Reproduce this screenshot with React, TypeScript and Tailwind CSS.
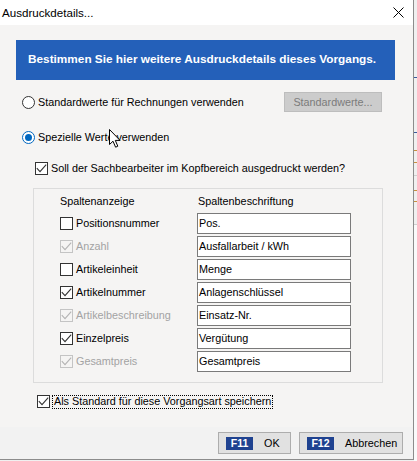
import React from "react";

function Check({ checked, disabled }: { checked: boolean; disabled?: boolean }) {
  return (
    <span
      className={`flex h-[13px] w-[13px] shrink-0 items-center justify-center border ${
        disabled ? "border-[#c4c4c4] bg-[#f5f4f3]" : "border-[#333333] bg-white"
      }`}
    >
      {checked && (
        <svg width="11" height="11" viewBox="0 0 11 11">
          <path
            d="M0.8 5.2 L4 8.6 L10.2 1.6"
            fill="none"
            stroke={disabled ? "#b3b3b3" : "#333333"}
            strokeWidth="1.1"
          />
        </svg>
      )}
    </span>
  );
}

function Radio({ on }: { on: boolean }) {
  return (
    <span
      className={`flex h-[13px] w-[13px] shrink-0 items-center justify-center rounded-full border bg-white ${
        on ? "border-[#0067c0]" : "border-[#333333]"
      }`}
    >
      {on && <span className="h-[7px] w-[7px] rounded-full bg-[#0067c0]" />}
    </span>
  );
}

type Row = { label: string; caption: string; checked: boolean; disabled?: boolean };

const rows: Row[] = [
  { label: "Positionsnummer", caption: "Pos.", checked: false },
  { label: "Anzahl", caption: "Ausfallarbeit / kWh", checked: true, disabled: true },
  { label: "Artikeleinheit", caption: "Menge", checked: false },
  { label: "Artikelnummer", caption: "Anlagenschlüssel", checked: true },
  { label: "Artikelbeschreibung", caption: "Einsatz-Nr.", checked: true, disabled: true },
  { label: "Einzelpreis", caption: "Vergütung", checked: true },
  { label: "Gesamtpreis", caption: "Gesamtpreis", checked: true, disabled: true },
];

function FKeyButton({ fkey, label, width }: { fkey: string; label: string; width: string }) {
  return (
    <div
      className={`flex h-[22px] ${width} items-center border border-[#adadad] bg-[#e1e1e1] pl-[7px]`}
    >
      <span className="flex h-[13px] w-[27px] items-center justify-center bg-[#1f4290] font-['Liberation_Sans',Arial,sans-serif] text-[10.5px] font-bold leading-none text-white">
        {fkey}
      </span>
      <span className="ml-[11px] text-[10.8px] text-black">{label}</span>
    </div>
  );
}

export default function App() {
  return (
    <div className="relative flex h-[461px] w-[417px] overflow-hidden bg-[#f0f0f0] font-['Liberation_Sans',Arial,sans-serif] text-[10.8px] text-black">
      {/* dialog window */}
      <div className="flex h-[460px] w-[414px] shrink-0 flex-col border-b border-r border-[#8c8c8c]">
        {/* title bar */}
        <div className="flex h-[25px] shrink-0 items-center justify-between bg-white pl-[2px] pr-[9px]">
          <span className="text-[11.6px]">Ausdruckdetails...</span>
          <svg width="11" height="11" viewBox="0 0 11 11" className="mb-[1px]">
            <path d="M0.5 0.5 L10.5 10.5 M10.5 0.5 L0.5 10.5" stroke="#000" strokeWidth="1" />
          </svg>
        </div>

        {/* body */}
        <div className="flex h-[402px] shrink-0 flex-col bg-[#f5f4f3] pt-[15px]">
          <div className="ml-[16px] flex h-[40px] w-[379px] items-center bg-[#2460b9] pl-[12px] text-[11.8px] font-bold text-white">
            Bestimmen Sie hier weitere Ausdruckdetails dieses Vorgangs.
          </div>

          <div className="mt-[12px] flex h-[20px] items-center pl-[22px] pr-[31px]">
            <Radio on={false} />
            <span className="ml-[3px]">Standardwerte für Rechnungen verwenden</span>
            <div className="ml-auto flex h-[20px] w-[98px] items-center justify-center border border-[#bdbdbd] bg-[#cccccc] text-[#7b7b7b]">
              Standardwerte...
            </div>
          </div>

          <div className="mt-[15px] flex h-[20px] items-center pl-[22px]">
            <Radio on={true} />
            <span className="ml-[3px]">Spezielle Werte verwenden</span>
          </div>

          <div className="mt-[11px] flex h-[20px] items-center pl-[35px]">
            <Check checked={true} />
            <span className="ml-[3px]">Soll der Sachbearbeiter im Kopfbereich ausgedruckt werden?</span>
          </div>

          {/* column settings group */}
          <div className="ml-[33px] mt-[10px] flex h-[195px] w-[350px] flex-col border border-[#dcdcdc] pl-[26px] pt-[4px]">
            <div className="flex h-[16px] items-center">
              <span className="w-[137px]">Spaltenanzeige</span>
              <span className="ml-[1px]">Spaltenbeschriftung</span>
            </div>
            <div className="mt-[4px] flex flex-col gap-[2px]">
              {rows.map((r) => (
                <div key={r.label} className="flex h-[21px] items-center">
                  <div className="flex w-[137px] items-center">
                    <Check checked={r.checked} disabled={r.disabled} />
                    <span className={`ml-[3px] ${r.disabled ? "text-[#a3a3a3]" : "text-black"}`}>
                      {r.label}
                    </span>
                  </div>
                  <div className="flex h-[21px] w-[154px] items-center border border-[#7a7a7a] bg-white pl-[1px]">
                    {r.caption}
                  </div>
                </div>
              ))}
            </div>
          </div>

          <div className="ml-[37px] mt-[10px] flex h-[17px] items-center">
            <Check checked={true} />
            <span className="ml-[2px] flex h-[14px] items-center border border-dotted border-black px-[1px]">
              Als Standard für diese Vorgangsart speichern
            </span>
          </div>
        </div>

        {/* footer */}
        <div className="flex h-[32px] shrink-0 justify-end gap-[8px] bg-[#f2f2f2] pr-[10px] pt-[5px]">
          <FKeyButton fkey="F11" label="OK" width="w-[73px]" />
          <FKeyButton fkey="F12" label="Abbrechen" width="w-[104px]" />
        </div>
      </div>

      {/* sliver of the window behind */}
      <div className="flex flex-1 flex-col bg-[#f0f0f0]">
        <div className="mt-[77px] h-[1px] bg-[#3a5a9a]" />
        <div className="mt-[54px] h-[1px] bg-[#3a5a9a]" />
        <div className="mt-[17px] h-[1px] bg-[#c89040]" />
        <div className="mt-[11px] h-[1px] bg-[#c89040]" />
        <div className="mt-[12px] h-[1px] bg-[#d0d0d0]" />
        <div className="mt-[14px] h-[1px] bg-[#c89040]" />
        <div className="mt-[10px] h-[1px] bg-[#c89040]" />
        <div className="mt-[22px] h-[1px] bg-[#d0d0d0]" />
        <div className="flex-1 bg-[#fafafa]" />
      </div>

      {/* mouse pointer */}
      <svg
        className="pointer-events-none absolute left-[109px] top-[129px]"
        width="13"
        height="20"
        viewBox="0 0 13 20"
      >
        <path
          d="M0.5 0.5 L0.5 15.5 L4 12.2 L6.6 18.2 L8.8 17.2 L6.3 11.4 L11 11.4 Z"
          fill="#fff"
          stroke="#000"
          strokeWidth="1"
          strokeLinejoin="miter"
        />
      </svg>
    </div>
  );
}
